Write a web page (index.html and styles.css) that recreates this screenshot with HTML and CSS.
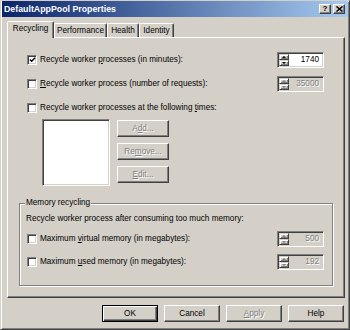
FILE: index.html
```html
<!DOCTYPE html>
<html>
<head>
<meta charset="utf-8">
<link rel="stylesheet" href="styles.css">
</head>
<body>
<div class="window">
  <div class="titlebar">
    <span class="title">DefaultAppPool Properties</span>
    <div class="caption-btns">
      <span class="cbtn help">?</span>
      <span class="cbtn close"><svg width="7" height="6" viewBox="0 0 7 6"><path d="M0.5 0.5 L6.5 5.5 M6.5 0.5 L0.5 5.5" stroke="#000" stroke-width="1.5"/></svg></span>
    </div>
  </div>
  <div class="tabs">
    <div class="tab active">Recycling</div>
    <div class="tab t-perf">Performance</div>
    <div class="tab t-health">Health</div>
    <div class="tab t-id">Identity</div>
  </div>
  <div class="panel">
    <div class="row">
      <label class="check"><span class="box"><svg width="8" height="8" viewBox="0 0 8 8"><path d="M1 3.5 L3 5.5 L7 1.5" fill="none" stroke="#000" stroke-width="1.6"/></svg></span><span>Recycle worker <u>p</u>rocesses (in minutes):</span></label>
      <div class="spin"><div class="arrows"><span class="sb"><i class="up"></i></span><span class="sb"><i class="down"></i></span></div><div class="val">1740</div></div>
    </div>
    <div class="row gap8">
      <label class="check"><span class="box"></span><span><u>R</u>ecycle worker process (number of requests):</span></label>
      <div class="spin disabled"><div class="arrows"><span class="sb"><i class="up"></i></span><span class="sb"><i class="down"></i></span></div><div class="val">35000</div></div>
    </div>
    <div class="row gap8">
      <label class="check"><span class="box"></span><span>Recycle worker processes at the following <u>t</u>imes:</span></label>
    </div>
    <div class="times">
      <div class="listbox"></div>
      <div class="side-btns">
        <span class="btn small disabled">A<u>d</u>d...</span>
        <span class="btn small disabled">Re<u>m</u>ove...</span>
        <span class="btn small disabled"><u>E</u>dit...</span>
      </div>
    </div>
    <fieldset class="group">
      <legend>Memory recycling</legend>
      <div class="group-text">Recycle worker process after consuming too much memory:</div>
      <div class="row mem1">
        <label class="check"><span class="box"></span><span>Maximum <u>v</u>irtual memory (in megabytes):</span></label>
        <div class="spin disabled"><div class="arrows"><span class="sb"><i class="up"></i></span><span class="sb"><i class="down"></i></span></div><div class="val">500</div></div>
      </div>
      <div class="row mem2">
        <label class="check"><span class="box"></span><span>Maximum <u>u</u>sed memory (in megabytes):</span></label>
        <div class="spin disabled"><div class="arrows"><span class="sb"><i class="up"></i></span><span class="sb"><i class="down"></i></span></div><div class="val">192</div></div>
      </div>
    </fieldset>
  </div>
  <div class="footer">
    <span class="btn default">OK</span>
    <span class="btn">Cancel</span>
    <span class="btn disabled"><u>A</u>pply</span>
    <span class="btn">Help</span>
  </div>
</div>
</body>
</html>
```

FILE: styles.css
```css
* { box-sizing: border-box; }
html, body { margin: 0; padding: 0; background: #d4d0c8; }
body {
  font-family: "Liberation Sans", Arial, sans-serif;
  font-size: 8.2px;
  color: #000;
}
.window {
  width: 350px;
  height: 330px;
  background: #d4d0c8;
  border: 1px solid;
  border-color: #d4d0c8 #404040 #404040 #d4d0c8;
  box-shadow: inset 1px 1px 0 #fff, inset -1px -1px 0 #808080;
  padding: 0 1px;
}
.titlebar {
  height: 16px;
  margin-top: 0;
  display: flex;
  align-items: center;
  justify-content: space-between;
  background: linear-gradient(to right, #0a246a, #a6caf0);
  padding: 0 3px 0 2px;
}
.title {
  color: #fff;
  font-weight: bold;
  font-size: 8.8px;
  line-height: 16px;
}
.caption-btns { display: flex; gap: 2px; }
.cbtn {
  width: 12px;
  height: 10px;
  background: #d4d0c8;
  border: 1px solid;
  border-color: #fff #404040 #404040 #fff;
  box-shadow: inset -1px -1px 0 #808080;
  display: flex;
  align-items: center;
  justify-content: center;
  font-weight: bold;
  font-size: 8px;
  line-height: 8px;
}
.tabs {
  display: flex;
  align-items: flex-end;
  height: 20px;
  margin-left: 5px;
  position: relative;
  z-index: 1;
}
.tab {
  height: 14px;
  border: 1px solid;
  border-bottom: none;
  border-color: #fff #404040 transparent #fff;
  box-shadow: inset -1px 0 0 #808080;
  border-radius: 2px 2px 0 0;
  padding: 0 3px;
  display: flex;
  align-items: center;
  justify-content: center;
  line-height: 10px;
  font-size: 8.2px;
}
.tab.active {
  width: 47px;
  height: 17px;
  margin-bottom: -1px;
  background: #d4d0c8;
  padding-bottom: 2px;
}
.t-perf { width: 53px; }
.t-health { width: 32px; }
.t-id { width: 35px; }
.panel {
  margin-left: 5px;
  width: 338px;
  height: 261px;
  border: 1px solid;
  border-color: #fff #404040 #404040 #fff;
  box-shadow: inset -1px -1px 0 #808080;
  padding: 14px 20px 0 19px;
}
.row {
  display: flex;
  align-items: center;
  justify-content: space-between;
  height: 16px;
}
.gap8 { margin-top: 8px; }
.check { display: flex; align-items: center; gap: 3px; line-height: 10px; }
.box {
  width: 10px;
  height: 10px;
  background: #fff;
  border: 1px solid;
  border-color: #808080 #fff #fff #808080;
  box-shadow: inset 1px 1px 0 #404040, inset -1px -1px 0 #d4d0c8;
  display: flex;
  align-items: center;
  justify-content: center;
  flex: none;
}
.box svg { display: block; margin: 0 0 0 1px; }
.spin {
  width: 47px;
  height: 16px;
  display: flex;
  background: #fff;
  border: 1px solid;
  border-color: #808080 #fff #fff #808080;
  box-shadow: inset 1px 1px 0 #404040, inset -1px -1px 0 #d4d0c8;
  padding: 1px;
}
.spin.disabled { background: #d4d0c8; }
.arrows { display: flex; flex-direction: column; width: 10px; flex: none; }
.sb {
  flex: 1;
  background: #d4d0c8;
  border: 1px solid;
  border-color: #d4d0c8 #404040 #404040 #d4d0c8;
  box-shadow: inset 1px 1px 0 #fff, inset -1px -1px 0 #808080;
  display: flex;
  align-items: center;
  justify-content: center;
}
.sb i { width: 0; height: 0; border-left: 2px solid transparent; border-right: 2px solid transparent; }
.sb i.up { border-bottom: 2px solid #000; }
.sb i.down { border-top: 2px solid #000; }
.disabled .sb i.up { border-bottom-color: #808080; }
.disabled .sb i.down { border-top-color: #808080; }
.val {
  flex: 1;
  text-align: right;
  padding-right: 3px;
  line-height: 12px;
  font-size: 8.2px;
}
.disabled .val { color: #808080; text-shadow: 1px 1px 0 #fff; }
.times {
  display: flex;
  gap: 7px;
  margin: 3px 0 0 15px;
}
.listbox {
  width: 68px;
  height: 67px;
  background: #fff;
  border: 1px solid;
  border-color: #808080 #fff #fff #808080;
  box-shadow: inset 1px 1px 0 #404040, inset -1px -1px 0 #d4d0c8;
}
.side-btns {
  display: flex;
  flex-direction: column;
  gap: 6px;
  padding-top: 1px;
}
.btn {
  width: 56px;
  height: 17px;
  display: flex;
  align-items: center;
  justify-content: center;
  background: #d4d0c8;
  border: 1px solid;
  border-color: #fff #404040 #404040 #fff;
  box-shadow: inset -1px -1px 0 #808080;
  line-height: 10px;
}
.btn.small { width: 52px; }
.btn.disabled { color: #808080; text-shadow: 1px 1px 0 #fff; }
.btn.default {
  border: 1px solid #000;
  box-shadow: inset 1px 1px 0 #fff, inset -1px -1px 0 #404040, inset -2px -2px 0 #808080;
}
.group {
  margin: 12px 0 0 -8px;
  width: 314px;
  border: 1px solid #808080;
  box-shadow: 1px 1px 0 #fff, inset 1px 1px 0 #fff;
  padding: 0 8px 15px 6px;
  min-width: 0;
}
.group legend {
  padding: 0 1px;
  margin-left: -1px;
  line-height: 10px;
  background: #d4d0c8;
}
.group-text { line-height: 10px; margin-top: 6px; }
.mem1 { margin-top: 7px; }
.mem2 { margin-top: 7px; }
.mem1 .check, .mem2 .check { margin-left: 1px; }
.footer {
  display: flex;
  justify-content: flex-end;
  gap: 6px;
  margin-top: 7px;
  padding-right: 4px;
}
```
